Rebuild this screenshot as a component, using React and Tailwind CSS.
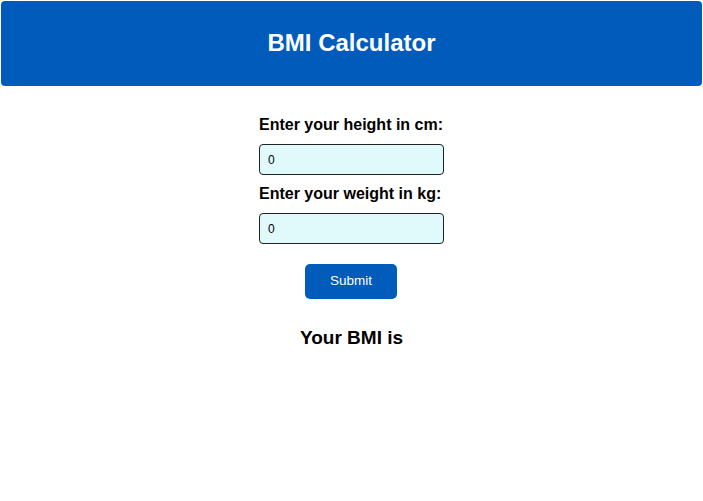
export default function App() {
  return (
    <div className="min-h-[501px] bg-white p-px font-['Liberation_Sans',Arial,sans-serif]">
      <header className="h-[85px] rounded-[4px] bg-[#005bbb] flex items-center justify-center pb-[2px]">
        <h1 className="text-[24px] font-bold text-white">BMI Calculator</h1>
      </header>
      <div className="flex flex-col items-center pt-[30px]">
        <div className="w-[185px] flex flex-col">
          <label className="text-[16px] font-bold text-black leading-[18px]">Enter your height in cm:</label>
          <input
            type="text"
            defaultValue="0"
            className="mt-[10px] h-[31px] w-full rounded-[4px] border border-[#222] bg-[#e0f9fb] px-[8px] text-[12px] text-black outline-none"
          />
          <label className="mt-[10px] text-[16px] font-bold text-black leading-[18px]">Enter your weight in kg:</label>
          <input
            type="text"
            defaultValue="0"
            className="mt-[10px] h-[31px] w-full rounded-[4px] border border-[#222] bg-[#e0f9fb] px-[8px] text-[12px] text-black outline-none"
          />
        </div>
        <button className="mt-[20px] mr-px h-[35px] w-[92px] rounded-[5px] bg-[#005bbb] text-[13.5px] text-white">
          Submit
        </button>
        <h2 className="mt-[27px] text-[19px] font-bold text-black leading-[24px]">Your BMI is</h2>
      </div>
    </div>
  )
}
